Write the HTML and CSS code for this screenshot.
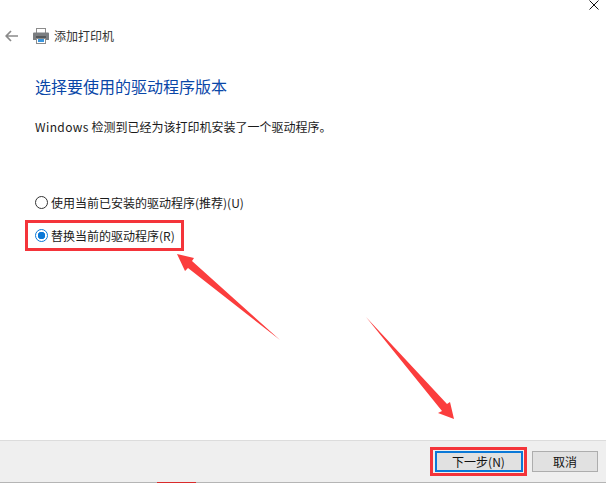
FILE: index.html
```html
<!DOCTYPE html>
<html lang="zh-CN">
<head>
    <meta charset="UTF-8">
    <title>添加打印机</title>
    <link rel="stylesheet" href="styles.css">
</head>
<body>
    <div class="window">
        <svg class="close-icon" width="10" height="10" viewBox="0 0 10 10"><path d="M0.5 0.5L9.5 9.5M9.5 0.5L0.5 9.5" stroke="#111" stroke-width="1" fill="none"/></svg>
        <header class="title-row">
            <svg class="back-icon" width="14" height="12" viewBox="0 0 14 12"><path d="M6 1L1.2 6L6 11M1.5 6H13" stroke="#8a8a8a" stroke-width="1.7" fill="none"/></svg>
            <svg class="printer-icon" width="16" height="16" viewBox="0 0 16 16">
                <rect x="3.500" y="0.500" width="9" height="5" fill="#fff" stroke="#8c8c8c"/>
                <path d="M1 4.500h14a1 1 0 0 1 1 1v6.500h-3v-2H3v2H0V5.500a1 1 0 0 1 1-1z" fill="#7b7e81"/>
                <rect x="3" y="8" width="10" height="2" fill="#55585b"/>
                <rect x="3.500" y="10.500" width="9" height="5" fill="#fff" stroke="#8c8c8c"/>
                <rect x="5" y="11" width="6" height="3" fill="#3a96dd"/>
            </svg>
            <span class="title-text">添加打印机</span>
        </header>
        <main class="content">
            <h1 class="heading">选择要使用的驱动程序版本</h1>
            <p class="desc"><span class="latin">Windows</span> 检测到已经为该打印机安装了一个驱动程序。</p>
            <div class="options">
                <div class="option">
                    <span class="radio"></span>
                    <span>使用当前已安装的驱动程序(推荐)(U)</span>
                </div>
                <div class="option option-marked">
                    <span class="radio radio-on"></span>
                    <span>替换当前的驱动程序(R)</span>
                </div>
            </div>
        </main>
        <footer class="footer">
            <div class="next-mark"><button class="btn btn-default">下一步(N)</button></div>
            <button class="btn">取消</button>
        </footer>
        <div class="bottom-edge"><span class="edge-red"></span></div>
    </div>
    <svg class="arrows" width="606" height="483" viewBox="0 0 606 483">
        <path d="M177 254L194 258L192 261L280 340L188 268L185 271Z" fill="#fb3d3d"/>
        <path d="M366 317L447 404L450 402L454 419L438 413L442 411Z" fill="#fb3d3d"/>
    </svg>
</body>
</html>
```

FILE: styles.css
```css
html, body { margin: 0; height: 100%; }
body { background-color: #fff; color: #1a1a1a; font-family: "Noto Sans CJK SC", "Liberation Sans", sans-serif; font-size: 12px; overflow: hidden; }
.window { position: relative; display: flex; flex-direction: column; width: 606px; height: 483px; }
.close-icon { position: absolute; top: 0; right: 7px; }
.title-row { display: flex; align-items: center; height: 16px; padding: 27px 0 0 5px; }
.back-icon { margin: 2px 14px 0 0; }
.printer-icon { margin: 2px 5px 0 0; }
.title-text { font-size: 12px; color: #333; }
.content { flex: 1; padding: 0 0 0 35px; }
.heading { margin: 33px 0 0; height: 20px; font-size: 16px; font-weight: normal; line-height: 20px; color: #0a47a8; }
.desc { margin: 22px 0 0; height: 18px; line-height: 18px; font-size: 12px; }
.latin { letter-spacing: 0.4px; }
.options { display: flex; flex-direction: column; margin: 51px 0 0 -10px; }
.option { display: flex; align-items: center; gap: 3px; box-sizing: border-box; height: 30px; padding-left: 10px; white-space: nowrap; }
.option-marked { width: 159px; height: 31px; margin-top: 3px; padding-left: 7px; border: 3px solid #f4343a; }
.radio { flex: none; box-sizing: border-box; width: 13px; height: 13px; border: 1px solid #333; border-radius: 50%; background-color: #fff; }
.radio-on { display: flex; border-color: #0a78d7; background: radial-gradient(circle, #0a78d7 0 3.500px, #fff 4px); }
.footer { display: flex; align-items: center; justify-content: flex-end; gap: 5px; box-sizing: border-box; height: 42px; padding-right: 8px; background-color: #efefef; border-top: 1px solid #dcdcdc; }
.next-mark { box-sizing: border-box; display: flex; justify-content: center; align-items: center; width: 97px; height: 29px; border: 3px solid #f4343a; }
.btn { box-sizing: border-box; width: 66px; height: 21px; padding: 0; font-family: inherit; font-size: 12px; color: #111; background-color: #e1e1e1; border: 1px solid #adadad; }
.btn-default { width: 88px; border: 2px solid #0a78d7; }
.bottom-edge { flex: none; height: 1px; background-color: #b5b5b5; }
.edge-red { display: block; width: 39px; height: 1px; margin-left: 157px; background-color: #d92b2b; }
.arrows { position: absolute; top: 0; left: 0; pointer-events: none; }
```
